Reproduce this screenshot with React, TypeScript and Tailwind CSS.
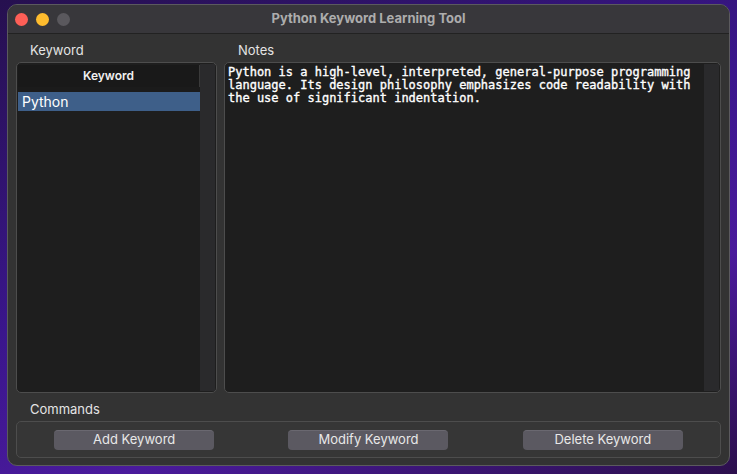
const notes =
  'Python is a high-level, interpreted, general-purpose programming\nlanguage. Its design philosophy emphasizes code readability with\nthe use of significant indentation.'

const keywords = ['Python']

const commands = ['Add Keyword', 'Modify Keyword', 'Delete Keyword']

function TrafficLights() {
  return (
    <div className="flex items-center gap-[8px] pl-[7px] pt-[1px]">
      <span className="size-[13px] rounded-full bg-[#fe5f57]" />
      <span className="size-[13px] rounded-full bg-[#febc2e]" />
      <span className="size-[13px] rounded-full bg-[#5a585d]" />
    </div>
  )
}

function SectionLabel({ children }: { children: string }) {
  return (
    <div className="flex h-[16px] items-center pl-[14px] text-[13px] text-[#e4e4e4]">
      {children}
    </div>
  )
}

function KeywordList() {
  return (
    <div className="flex h-[331px] rounded-[5px] border border-[#4d4d4d] bg-[#1e1e1e] p-[1px]">
      <div className="flex min-w-0 flex-1 flex-col">
        <div className="mt-[1px] flex h-[22px] items-center justify-center border-r border-[#3a3a3a] bg-[#191919] text-[12px] font-semibold text-[#f0f0f0]">
          Keyword
        </div>
        <div className="h-[5px] bg-[#1b1b1b]" />
        {keywords.map((keyword) => (
          <div
            key={keyword}
            className="flex h-[19px] items-center bg-[#3e5f89] pl-[4px] text-[14px] text-white"
          >
            {keyword}
          </div>
        ))}
      </div>
      <div className="w-[15px] bg-[#2a2a2c]" />
    </div>
  )
}

function NotesArea() {
  return (
    <div className="flex h-[331px] rounded-[5px] border border-[#4d4d4d] bg-[#1e1e1e] p-[1px]">
      <pre className="min-w-0 flex-1 pl-[2px] pt-[2px] font-['DejaVu_Sans_Mono',monospace] text-[12px] leading-[13px] text-white [-webkit-text-stroke:0.35px_#ffffff]">
        {notes}
      </pre>
      <div className="w-[15px] bg-[#2a2a2c]" />
    </div>
  )
}

export default function App() {
  return (
    <div className="h-[474px] w-[737px] overflow-hidden bg-[linear-gradient(160deg,#26104f_0%,#3a168c_45%,#4a1a9c_70%,#2c0f4c_100%)] pl-[7px] pt-[4px] font-['Inter','Liberation_Sans',sans-serif]">
      <div className="flex h-[462px] w-[723px] flex-col overflow-hidden rounded-[10px] border border-[#5b5a5e] bg-[#333333]">
        <div className="relative flex h-[29px] items-center border-b border-[#222222] bg-[#38373b]">
          <TrafficLights />
          <div className="absolute inset-x-0 text-center text-[13px] font-bold text-[#adadad]">
            Python Keyword Learning Tool
          </div>
        </div>
        <div className="flex flex-1 flex-col px-[8px]">
          <div className="grid grid-cols-[201px_497px] gap-x-[7px]">
            <div className="pb-[3px] pt-[9px]">
              <SectionLabel>Keyword</SectionLabel>
            </div>
            <div className="pb-[3px] pt-[9px]">
              <SectionLabel>Notes</SectionLabel>
            </div>
            <KeywordList />
            <NotesArea />
          </div>
          <div className="pb-[3px] pt-[9px]">
            <SectionLabel>Commands</SectionLabel>
          </div>
          <div className="flex h-[37px] items-center justify-around rounded-[5px] border border-[#4d4d4d] bg-[#363636]">
            {commands.map((label) => (
              <button
                key={label}
                type="button"
                className="flex h-[20px] w-[160px] items-center justify-center rounded-[4px] border-t border-[#6a6870] bg-[#5b5961] text-[13px] text-[#e8e8e8]"
              >
                {label}
              </button>
            ))}
          </div>
        </div>
      </div>
    </div>
  )
}
